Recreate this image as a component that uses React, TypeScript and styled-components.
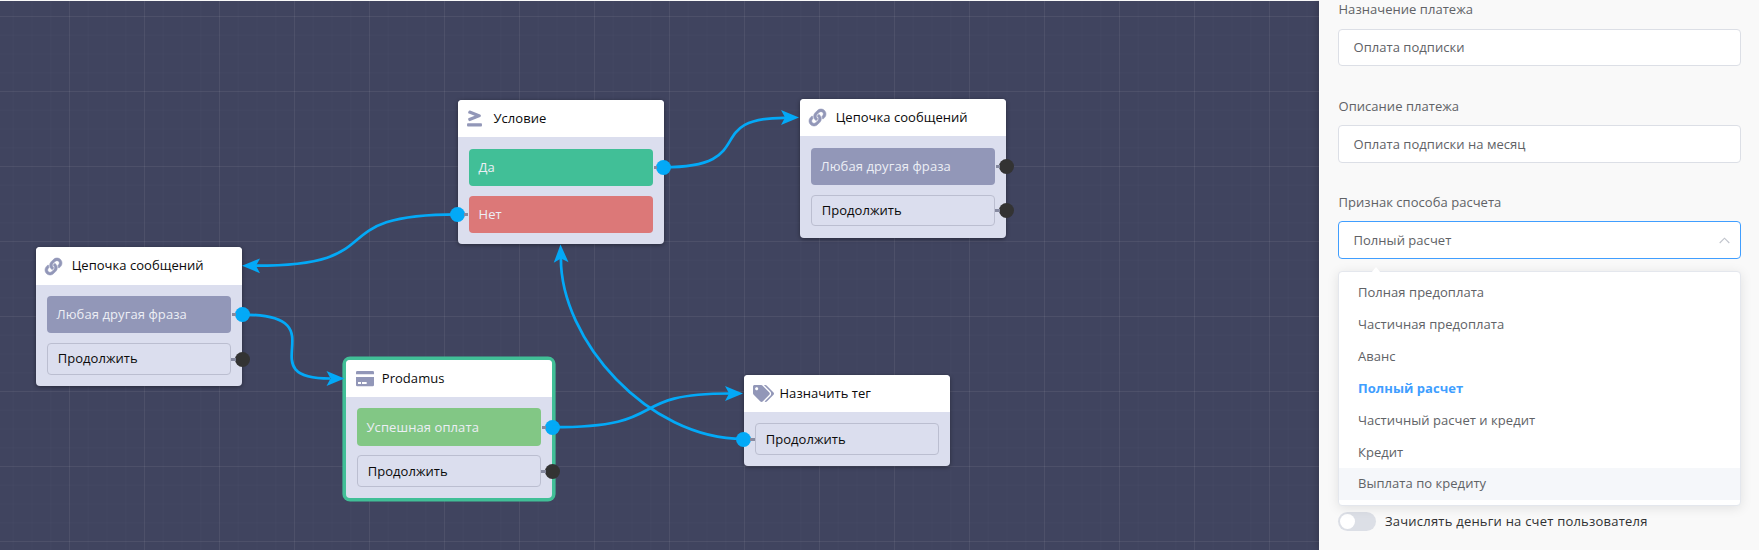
import React from "react";
import styled, { createGlobalStyle } from "styled-components";
import { FaLink, FaTags, FaGreaterThanEqual } from "react-icons/fa";

const GlobalStyle = createGlobalStyle`
  * { box-sizing: border-box; }
  body {
    margin: 0;
    overflow: hidden;
    background: #f9f9f9;
    font-family: "Open Sans", sans-serif;
    font-size: 13px;
    letter-spacing: 0.04px;
  }
`;

const Page = styled.div`
  display: flex;
  width: 1759px;
  height: 550px;
`;

const gridLine = (dir: string, alpha: number) =>
  `linear-gradient(${dir}, rgba(255, 255, 255, ${alpha}) 1px, transparent 1px)`;

const Canvas = styled.main`
  position: relative;
  flex: 1;
  margin-top: 1px;
  overflow: hidden;
  background-color: #40445f;
  background-image: ${gridLine("to right", 0.05)}, ${gridLine("to bottom", 0.05)},
    ${gridLine("to right", 0.015)}, ${gridLine("to bottom", 0.015)};
  background-size: 75px 75px, 75px 75px, 18.75px 18.75px, 18.75px 18.75px;
  background-position: 69px 15px;
`;

const Wires = styled.svg`
  position: absolute;
  z-index: 1;
  left: 0;
  top: -1px;
  width: 1319px;
  height: 550px;
  fill: none;
  stroke: #03a9f7;
  stroke-width: 2.7;
`;

const Card = styled.section<{ $x: number; $y: number; $active?: boolean }>`
  position: absolute;
  z-index: 0;
  left: ${(p) => p.$x}px;
  top: ${(p) => p.$y - 1}px;
  width: 206px;
  border-radius: 4px;
  background: #dbdeee;
  box-shadow: ${(p) => (p.$active ? "0 0 0 3.6px #41bf97" : "0 1px 4px rgba(0, 0, 0, 0.4)")};
`;

const CardHeader = styled.header<{ $h: number }>`
  display: flex;
  align-items: center;
  height: ${(p) => p.$h}px;
  padding: 0 0 2px 8px;
  border-radius: 4px 4px 0 0;
  background: #fff;
  color: #0a0a0a;
`;

const IconSlot = styled.span<{ $w: number; $inset: number }>`
  display: flex;
  width: ${(p) => p.$w}px;
  margin-top: 2px;
  padding-left: ${(p) => p.$inset}px;
  color: #9297b8;

  svg {
    flex: none;
    overflow: visible;
  }
`;

const CardBody = styled.div<{ $top: number; $gap: number; $bottom: number }>`
  display: flex;
  flex-direction: column;
  gap: ${(p) => p.$gap}px;
  padding: ${(p) => p.$top}px 11px ${(p) => p.$bottom}px;
`;

const tones = {
  violet: "#9297b8",
  green: "#41bf97",
  red: "#dc7878",
  lime: "#82c785",
  plain: "transparent",
};

type Tone = keyof typeof tones;

const Output = styled.div<{ $tone: Tone; $h: number; $lift: number }>`
  position: relative;
  display: flex;
  align-items: center;
  height: ${(p) => p.$h}px;
  padding: 0 0 ${(p) => p.$lift}px ${(p) => (p.$tone === "plain" ? 9.7 : 9.5)}px;
  border: ${(p) => (p.$tone === "plain" ? "1px solid #bbbed0" : "0")};
  border-radius: 4px;
  background: ${(p) => tones[p.$tone]};
  color: ${(p) => (p.$tone === "plain" ? "#0a0a0a" : "#eceef5")};
  letter-spacing: ${(p) => (p.$tone === "plain" ? 0.04 : 0.09)}px;
`;

const Port = styled.i<{ $side: "left" | "right"; $linked?: boolean; $reach: number }>`
  position: absolute;
  top: 50%;
  ${(p) => p.$side}: ${(p) => -p.$reach}px;
  width: 15px;
  height: 15px;
  margin-top: -7.5px;
  border-radius: 50%;
  background: ${(p) => (p.$linked ? "#03a9f7" : "#333")};

  &::before {
    content: "";
    position: absolute;
    top: 6px;
    ${(p) => p.$side}: 14px;
    width: ${(p) => p.$reach - 15}px;
    height: 3px;
    background: #868aa0;
  }
`;

const Panel = styled.aside`
  position: relative;
  width: 440px;
  padding: 0 18px 0 19px;
  background: #f9f9f9;
  box-shadow: 0 0 8px rgba(0, 0, 0, 0.25);
  color: #606266;
`;

const Group = styled.div<{ $gap: number; $labelGap: number }>`
  display: flex;
  flex-direction: column;
  gap: ${(p) => p.$labelGap}px;
  padding-top: ${(p) => p.$gap}px;
`;

const Label = styled.label`
  height: 19px;
  padding-left: 0.5px;
  line-height: 18px;
`;

const Field = styled.div<{ $focus?: boolean; $h: number }>`
  position: relative;
  display: flex;
  align-items: center;
  justify-content: space-between;
  height: ${(p) => p.$h}px;
  padding: 0 10px ${(p) => (p.$h === 37 ? 1 : 0)}px 14.5px;
  border: 1px solid ${(p) => (p.$focus ? "#409eff" : "#dcdfe6")};
  border-radius: 4px;
  background: #fff;
`;

const Dropdown = styled.ul`
  position: absolute;
  z-index: 2;
  left: -1px;
  right: -1px;
  top: 49px;
  height: 235px;
  margin: 0;
  padding: 4px 0;
  list-style: none;
  border: 1px solid #e4e7ed;
  border-radius: 4px;
  background: #fff;
  box-shadow: 0 2px 12px rgba(0, 0, 0, 0.1);

  &::before {
    content: "";
    position: absolute;
    top: -5px;
    left: 32px;
    border: solid transparent;
    border-width: 0 5.5px 6px;
    border-bottom-color: #fff;
  }
`;

const Option = styled.li<{ $state?: "selected" | "hover" }>`
  height: 32px;
  padding-left: 19px;
  line-height: ${(p) => (p.$state === "hover" ? 30 : 32)}px;
  background: ${(p) => (p.$state === "hover" ? "#f5f7fa" : "transparent")};
  color: ${(p) => (p.$state === "selected" ? "#409eff" : "#606266")};
  font-weight: ${(p) => (p.$state === "selected" ? 700 : 400)};
`;

const SwitchRow = styled.div`
  display: flex;
  gap: 9px;
  height: 19px;
  margin-top: 253px;
  color: #303133;
  line-height: 18px;
  letter-spacing: 0.22px;
`;

const Switch = styled.span`
  width: 38px;
  height: 19px;
  padding: 2px;
  border-radius: 10px;
  background: #dcdfe6;

  &::before {
    content: "";
    display: block;
    width: 15px;
    height: 15px;
    border-radius: 50%;
    background: #fff;
  }
`;

const CardIcon = () => (
  <svg width="18" height="15.4" viewBox="0 0 54 46" fill="currentColor">
    <path d="M0 10V4a4 4 0 0 1 4-4h46a4 4 0 0 1 4 4v6z" />
    <path
      fillRule="evenodd"
      d="M0 18h54v24a4 4 0 0 1-4 4H4a4 4 0 0 1-4-4zM6 33v6h9v-6zM18 33v6h14v-6z"
    />
  </svg>
);

const icons = {
  link: <FaLink size={17} strokeWidth={18} />,
  compare: <FaGreaterThanEqual size={17} />,
  card: <CardIcon />,
  tags: <FaTags size={21} />,
};

interface Row {
  text: string;
  tone: Tone;
  h: number;
  lift?: number;
  reach?: number;
  side?: "left" | "right";
  linked?: boolean;
}

interface CardData {
  title: string;
  icon: keyof typeof icons;
  iconWidth: number;
  iconInset: number;
  x: number;
  y: number;
  header: number;
  body: [number, number, number];
  active?: boolean;
  rows: Row[];
}

const cards: CardData[] = [
  {
    title: "Цепочка сообщений", icon: "link", iconWidth: 27.7, iconInset: 1, x: 36, y: 247, header: 38, body: [11, 10, 11],
    rows: [
      { text: "Любая другая фраза", tone: "violet", h: 37, lift: 1, linked: true },
      { text: "Продолжить", tone: "plain", h: 32, lift: 2 },
    ],
  },
  {
    title: "Условие", icon: "compare", iconWidth: 27.5, iconInset: 0, x: 458, y: 100, header: 37, body: [12, 10, 11],
    rows: [
      { text: "Да", tone: "green", h: 37, lift: 1, linked: true, reach: 18 },
      { text: "Нет", tone: "red", h: 37, lift: 1, linked: true, side: "left" },
    ],
  },
  {
    title: "Цепочка сообщений", icon: "link", iconWidth: 27.7, iconInset: 1, x: 800, y: 99, header: 37, body: [12, 10, 12],
    rows: [
      { text: "Любая другая фраза", tone: "violet", h: 37, lift: 1 },
      { text: "Продолжить", tone: "plain", h: 31, lift: 1 },
    ],
  },
  {
    title: "Prodamus", icon: "card", iconWidth: 27.8, iconInset: 2, x: 346, y: 360, header: 37, body: [11, 9, 11], active: true,
    rows: [
      { text: "Успешная оплата", tone: "lime", h: 38, linked: true },
      { text: "Продолжить", tone: "plain", h: 32 },
    ],
  },
  {
    title: "Назначить тег", icon: "tags", iconWidth: 27.5, iconInset: 1, x: 744, y: 375, header: 37, body: [11, 10, 11],
    rows: [{ text: "Продолжить", tone: "plain", h: 32, linked: true, side: "left" }],
  },
];

const wires = [
  { d: "M663.5 167.3C761.5 167.3 700 117.5 785 117.8", x: 799, y: 117.5, turn: 0 },
  { d: "M457.5 214.3C316.5 214.3 397 265.7 256 265.7", x: 242, y: 265.8, turn: 180 },
  { d: "M242.3 314.6C342.3 314.6 246 378.5 330 378.5", x: 344.5, y: 378.5, turn: 0 },
  { d: "M552.5 427.2C675.5 427.2 620 393.7 730 393.5", x: 743, y: 393.5, turn: 0 },
  { d: "M743.3 439C648 439 560.5 340 560.9 258", x: 560.5, y: 244.5, turn: -92 },
];

const options = [
  "Полная предоплата",
  "Частичная предоплата",
  "Аванс",
  "Полный расчет",
  "Частичный расчет и кредит",
  "Кредит",
  "Выплата по кредиту",
];

const optionState = (i: number) => (i === 3 ? "selected" : i === 6 ? "hover" : undefined);

const FlowCard = ({ card }: { card: CardData }) => (
  <Card $x={card.x} $y={card.y} $active={card.active}>
    <CardHeader $h={card.header}>
      <IconSlot $w={card.iconWidth} $inset={card.iconInset}>
        {icons[card.icon]}
      </IconSlot>
      {card.title}
    </CardHeader>
    <CardBody $top={card.body[0]} $gap={card.body[1]} $bottom={card.body[2]}>
      {card.rows.map((row) => (
        <Output key={row.text} $tone={row.tone} $h={row.h} $lift={row.lift ?? 0}>
          {row.text}
          <Port
            $side={row.side ?? "right"}
            $linked={row.linked}
            $reach={row.reach ?? (row.tone === "plain" ? 20 : 19)}
          />
        </Output>
      ))}
    </CardBody>
  </Card>
);

export default function App() {
  return (
    <Page>
      <GlobalStyle />
      <Canvas>
        {cards.map((card) => (
          <FlowCard key={card.x} card={card} />
        ))}
        <Wires viewBox="0 0 1319 550">
          {wires.map((w) => (
            <g key={w.d}>
              <path d={w.d} />
              <path
                d="M0 0L-18 -7.4L-14 0L-18 7.4Z"
                transform={`translate(${w.x} ${w.y}) rotate(${w.turn})`}
                fill="#03a9f7"
                stroke="none"
              />
            </g>
          ))}
        </Wires>
      </Canvas>
      <Panel>
        <Group $gap={0} $labelGap={10}>
          <Label>Назначение платежа</Label>
          <Field $h={37}>Оплата подписки</Field>
        </Group>
        <Group $gap={31} $labelGap={9}>
          <Label>Описание платежа</Label>
          <Field $h={38}>Оплата подписки на месяц</Field>
        </Group>
        <Group $gap={30} $labelGap={9}>
          <Label>Признак способа расчета</Label>
          <Field $focus $h={38}>
            Полный расчет
            <svg width="11" height="7" viewBox="0 0 11 7" fill="none" stroke="#c0c4cc" strokeWidth="1.1">
              <path d="M0.7 6L5.5 1.2L10.3 6" />
            </svg>
            <Dropdown>
              {options.map((text, i) => (
                <Option key={text} $state={optionState(i)}>
                  {text}
                </Option>
              ))}
            </Dropdown>
          </Field>
        </Group>
        <SwitchRow>
          <Switch />
          Зачислять деньги на счет пользователя
        </SwitchRow>
      </Panel>
    </Page>
  );
}
